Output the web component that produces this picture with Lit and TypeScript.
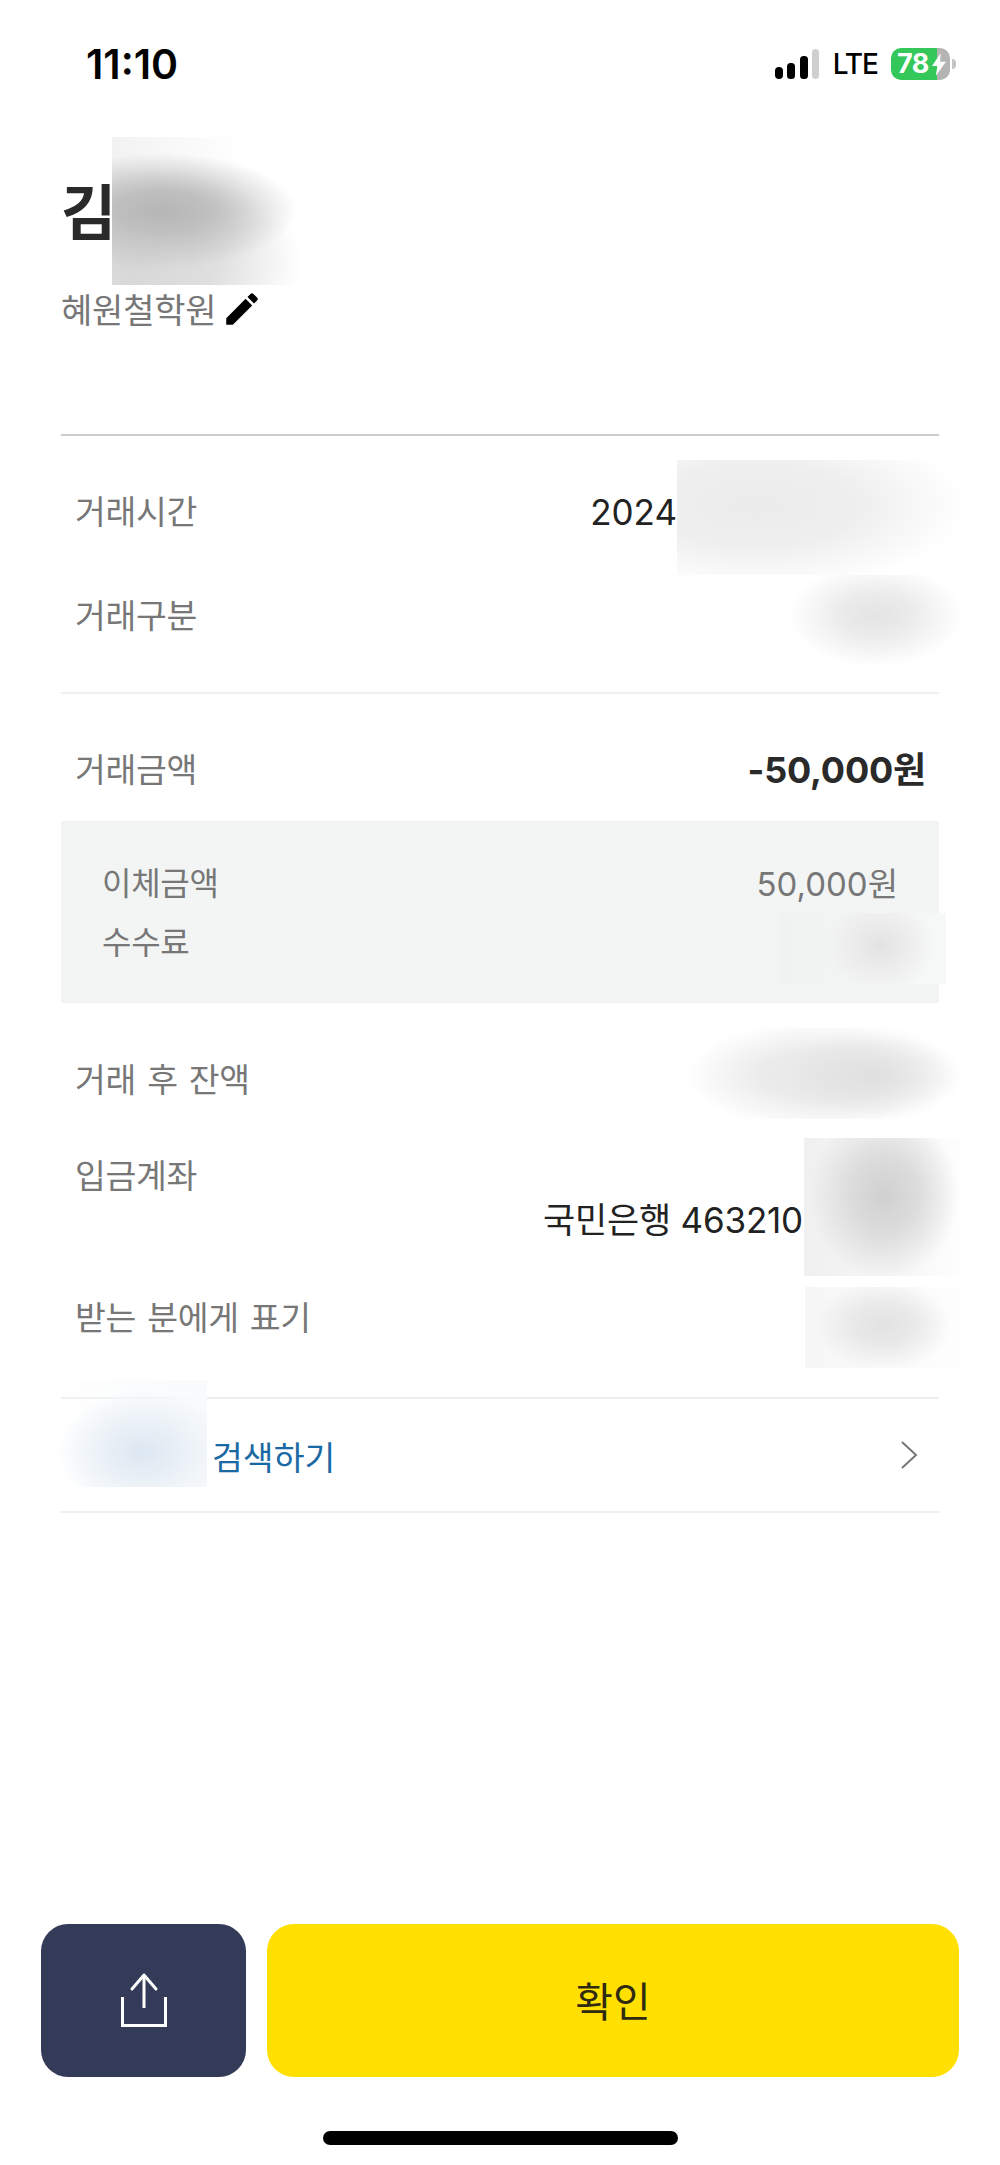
import { LitElement, html, css } from "lit";
import { customElement } from "lit/decorators.js";

const PATCHES = ["p-name", "p-time", "p-kind", "p-fee", "p-bal", "p-acct", "p-show", "p-search"];

@customElement("app-root")
export class AppRoot extends LitElement {
  static styles = css`
    :host {
      display: block;
      width: 1000px;
    }
    * { box-sizing: border-box; }
    .page {
      position: relative;
      width: 1000px;
      height: 2165px;
      overflow: hidden;
      background: #fff;
      display: flex;
      flex-direction: column;
      font-family: Inter, "Noto Sans CJK KR", sans-serif;
      color: #222;
    }
    .status {
      height: 128px;
      flex: none;
      display: flex;
      align-items: center;
      justify-content: space-between;
      padding: 0 50px 0 86px;
    }
    .time {
      font-size: 41px;
      font-weight: 600;
      color: #000;
      line-height: 1;
    }
    .indicators {
      display: flex;
      align-items: center;
      gap: 13px;
    }
    .lte {
      font-size: 28px;
      font-weight: 500;
      letter-spacing: -1px;
      line-height: 1;
      color: #000;
    }
    .signal { display: block; }
    .battery {
      position: relative;
      width: 59px;
      height: 32px;
      border-radius: 10px;
      background: linear-gradient(to right, #34c759 0 78%, #b4b4b4 78% 100%);
      color: #fff;
      font-size: 27px;
      font-weight: 700;
      line-height: 32px;
      padding-left: 6px;
      letter-spacing: -0.5px;
    }
    .battery svg {
      position: absolute;
      left: 41px;
      top: 5px;
    }
    .nub {
      position: absolute;
      left: 61px;
      top: 11px;
      width: 4px;
      height: 10px;
      border-radius: 0 4px 4px 0;
      background: #c4c4c4;
    }
    .head {
      flex: none;
      padding: 50px 61px 103px;
    }
    .name {
      font-size: 60px;
      font-weight: 700;
      line-height: 70px;
      color: #2a2a2a;
    }
    .sub {
      margin-top: 38px;
      display: flex;
      align-items: center;
      height: 45px;
      font-size: 34px;
      color: #777;
      letter-spacing: -0.2px;
      gap: 5px;
    }
    .sub svg { display: block; flex: none; }
    .section {
      flex: none;
      margin: 0 61px;
      border-top: 2px solid #efefef;
    }
    .section.strong { border-top-color: #cccccc; }
    .s1 { padding: 24px 0 24px; }
    .s2 { padding: 25px 0 0; }
    .row {
      display: flex;
      align-items: center;
      justify-content: space-between;
      padding: 0 10px 0 14px;
      font-size: 33.5px;
      letter-spacing: -0.3px;
      word-spacing: 2px;
      line-height: 44px;
      color: #777;
    }
    .h104 { height: 104px; }
    .h102 { height: 102px; }
    .val { color: #222; }
    .val-time { margin-right: 252px; letter-spacing: 0; font-size: 35px; }
    .amount-row { padding-right: 13px; }
    .amount {
      font-weight: 700;
      font-size: 36px;
      color: #2a2a2a;
      letter-spacing: -0.2px;
    }
    .panel {
      height: 182px;
      background: #f3f5f4;
      padding: 33px 41px 0 41px;
    }
    .panel .row { padding: 0; height: 59px; font-size: 32px; }
    .panel .row .num { font-size: 33px; letter-spacing: 0; }
    .after { padding-top: 25px; }
    .acct {
      height: 145px;
      padding: 0 10px 0 14px;
      display: flex;
      flex-direction: column;
      font-size: 33.5px;
      line-height: 44px;
      letter-spacing: -0.3px;
      color: #777;
    }
    .acct .top { margin-top: 22px; }
    .acct .val {
      align-self: flex-end;
      margin-right: 126px;
      font-size: 35px;
      letter-spacing: -0.2px;
    }
    .show { height: 82px; }
    .s3 { margin-top: 38px; }
    .link {
      height: 112px;
      display: flex;
      align-items: center;
      justify-content: space-between;
      padding: 0 20px 0 151px;
      font-size: 33.5px;
      letter-spacing: 0;
      color: #1a69a4;
    }
    .link svg { display: block; }
    .s4 { height: 2px; }
    .actions {
      margin-top: auto;
      flex: none;
      display: flex;
      gap: 21px;
      padding: 0 41px;
      height: 153px;
    }
    .btn {
      border: 0;
      border-radius: 27px;
      display: flex;
      align-items: center;
      justify-content: center;
      font-family: inherit;
      padding: 0;
    }
    .share { width: 205px; background: #343b58; }
    .confirm {
      flex: 1;
      background: #ffe000;
      color: #2f2a10;
      font-size: 41px;
      padding-bottom: 3px;
    }
    .home-row {
      flex: none;
      height: 88px;
      padding-top: 54px;
      display: flex;
      justify-content: center;
    }
    .home {
      width: 355px;
      height: 14px;
      margin-left: 1px;
      border-radius: 7px;
      background: #000;
    }
    .patch {
      position: absolute;
      pointer-events: none;
    }
    .p-name {
      left: 112px; top: 137px; width: 190px; height: 148px;
      background:
        radial-gradient(ellipse 135px 58px at 50px 74px, #b6b6b6 0%, #bfbfbf 35%, rgba(205,205,205,0) 100%),
        radial-gradient(ellipse 170px 95px at 20px 125px, #d6d6d6 0%, #dfdfdf 50%, rgba(255,255,255,0) 100%),
        linear-gradient(to right, #f2f2f2, rgba(255,255,255,0) 70%);
    }
    .p-time {
      left: 677px; top: 460px; width: 290px; height: 115px;
      background:
        radial-gradient(ellipse 210px 85px at 80px 45px, #ebebeb 0%, #efefef 50%, rgba(255,255,255,0) 100%);
    }
    .p-kind {
      left: 770px; top: 575px; width: 195px; height: 90px;
      background: radial-gradient(ellipse 87px 52px at 106px 40px, #e4e4e4 0%, #ebebeb 40%, rgba(255,255,255,0) 100%);
    }
    .p-fee {
      left: 780px; top: 913px; width: 166px; height: 71px;
      background:
        radial-gradient(ellipse 55px 48px at 100px 32px, #e3e3e3 0%, rgba(232,232,232,.6) 55%, rgba(240,240,240,0) 100%),
        linear-gradient(to right, #f0f1f1, #f7f8f8);
    }
    .p-bal {
      left: 680px; top: 1028px; width: 285px; height: 91px;
      background:
        radial-gradient(ellipse 85px 42px at 190px 47px, #e0e0e0 0%, rgba(228,228,228,0) 100%),
        radial-gradient(ellipse 140px 55px at 145px 47px, #e8e8e8 0%, #ebebeb 45%, rgba(255,255,255,0) 100%);
    }
    .p-acct {
      left: 804px; top: 1138px; width: 157px; height: 138px;
      background:
        radial-gradient(ellipse 75px 85px at 80px 57px, #d0d0d0 0%, #dcdcdc 45%, rgba(235,235,235,0) 100%),
        linear-gradient(to right, #f0f0f0, #f8f8f8 70%, #fefefe);
    }
    .p-show {
      left: 805px; top: 1287px; width: 157px; height: 81px;
      background:
        radial-gradient(ellipse 68px 45px at 78px 38px, #e2e2e2 0%, #e9e9e9 45%, rgba(245,245,245,0) 100%),
        linear-gradient(to right, #f6f6f6, #fefefe);
    }
    .p-search {
      left: 45px; top: 1380px; width: 162px; height: 107px;
      background:
        radial-gradient(ellipse 85px 62px at 98px 72px, #dde7f2 0%, #e9f0f6 45%, rgba(255,255,255,0) 100%),
        linear-gradient(to right, rgba(255,255,255,0), #f8fafc);
    }
  `;

  private signal() {
    return html`<svg class="signal" width="46" height="32" viewBox="0 0 46 32">
      <rect x="1" y="19" width="8" height="12" rx="4" fill="#000"></rect>
      <rect x="13" y="15" width="8" height="16" rx="3.5" fill="#000"></rect>
      <rect x="26" y="8" width="8" height="23" rx="3.5" fill="#000"></rect>
      <rect x="38" y="1" width="7" height="30" rx="3.5" fill="#cfcfcf"></rect>
    </svg>`;
  }

  render() {
    return html`
      <div class="page">
        <div class="status">
          <div class="time">11:10</div>
          <div class="indicators">
            ${this.signal()}
            <span class="lte">LTE</span>
            <div class="battery">78
              <svg width="14" height="23" viewBox="0 0 13 21">
                <path d="M8 0 L0 12 H5 L3.5 21 L13 8 H7.5 Z" fill="#fff"></path>
              </svg>
              <span class="nub"></span>
            </div>
          </div>
        </div>

        <div class="head">
          <div class="name">김</div>
          <div class="sub">
            <span>혜원철학원</span>
            <svg width="42" height="42" viewBox="0 0 24 24">
              <path fill="#000" d="M3 17.25V21h3.75L17.81 9.94l-3.75-3.75L3 17.25zM20.71 7.04c.39-.39.39-1.02 0-1.41l-2.34-2.34c-.39-.39-1.02-.39-1.41 0l-1.83 1.83 3.75 3.75 1.83-1.83z"></path>
            </svg>
          </div>
        </div>

        <div class="section strong s1">
          <div class="row h104"><span>거래시간</span><span class="val val-time">2024</span></div>
          <div class="row h104"><span>거래구분</span></div>
        </div>

        <div class="section s2">
          <div class="row h102 amount-row"><span>거래금액</span><span class="amount">-50,000원</span></div>
          <div class="panel">
            <div class="row"><span>이체금액</span><span class="num">50,000원</span></div>
            <div class="row"><span>수수료</span></div>
          </div>
          <div class="after">
            <div class="row h104"><span>거래 후 잔액</span></div>
            <div class="acct">
              <span class="top">입금계좌</span>
              <span class="val">국민은행 463210</span>
            </div>
            <div class="row show"><span>받는 분에게 표기</span></div>
          </div>
        </div>

        <div class="section s3">
          <div class="link">
            <span>검색하기</span>
            <svg width="20" height="30" viewBox="0 0 20 30">
              <path d="M3 2 L17 15 L3 28" fill="none" stroke="#777" stroke-width="2"></path>
            </svg>
          </div>
        </div>
        <div class="section s4"></div>

        <div class="actions">
          <button class="btn share" aria-label="공유">
            <svg width="46" height="58" viewBox="0 0 46 58" fill="none" stroke="#fff" stroke-width="3">
              <path d="M1.5 25 V53.5 H44.5 V25"></path>
              <path d="M23 3 V36"></path>
              <path d="M11 17 L23 3 L35 17" stroke-linecap="round" stroke-linejoin="round"></path>
            </svg>
          </button>
          <button class="btn confirm">확인</button>
        </div>
        <div class="home-row"><div class="home"></div></div>

        ${PATCHES.map((p) => html`<div class="patch ${p}"></div>`)}
      </div>
    `;
  }
}
